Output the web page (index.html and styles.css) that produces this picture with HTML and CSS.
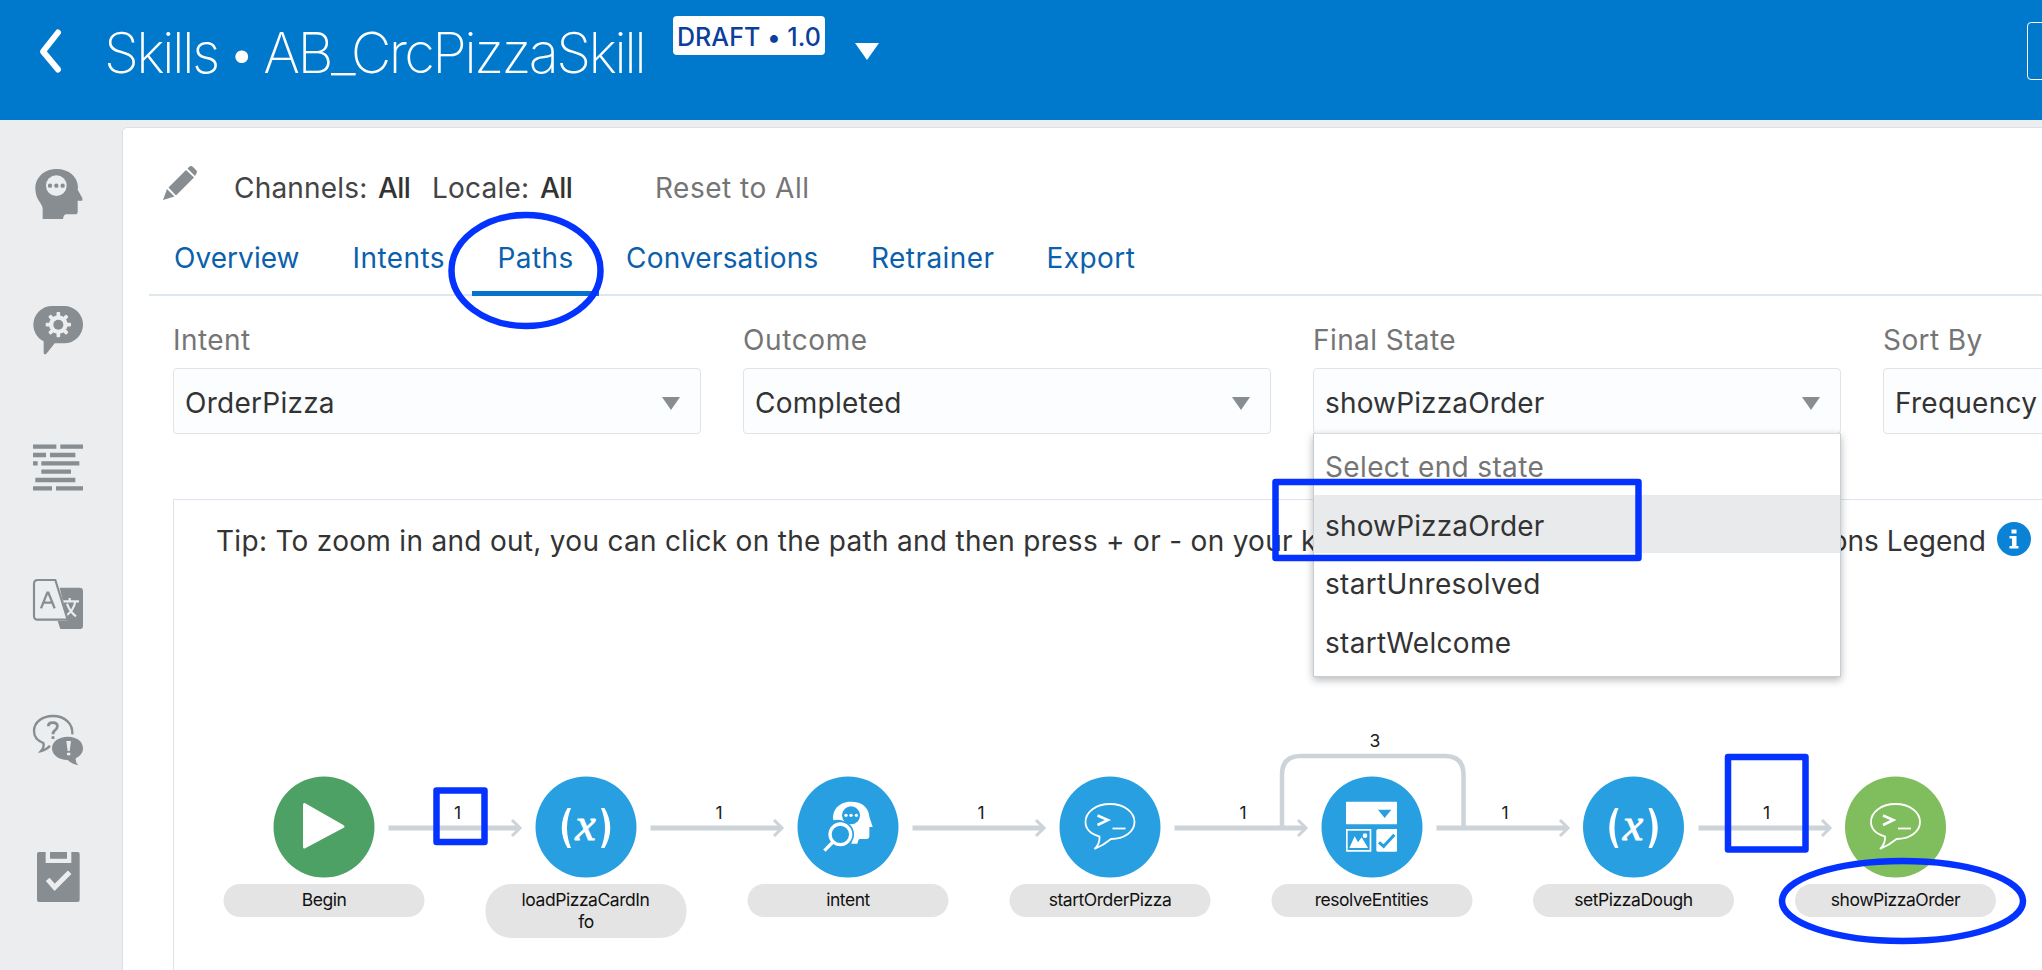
FILE: index.html
```html
<!DOCTYPE html>
<html lang="en">
<head>
<meta charset="utf-8">
<title>Skills • AB_CrcPizzaSkill</title>
<link rel="stylesheet" href="styles.css">
</head>
<body>
<header class="topbar">
  <svg class="back" viewBox="0 0 26 46"><path d="M21 4.500L6 23.500L21 41.500" /></svg>
  <h1 class="title">Skills • AB_CrcPizzaSkill</h1>
  <span class="badge">DRAFT • 1.0</span>
  <svg class="title-caret" viewBox="0 0 24 17"><path d="M0 0H24L12 17Z"/></svg>
  <button class="top-button" aria-label="Train"></button>
</header>
<div class="body">
  <nav class="sidebar">
    <svg class="side-icon" viewBox="0 0 150 150">
      <path class="fill" d="M70 0C109 0 134 24 135 55L134 62L148 87V95H134V128Q134 136 126 136H99Q92 137 90 150H29V118C27 102 7 92 7 58C7 25 34 0 70 0Z"/>
      <circle class="cut" cx="70" cy="50" r="31"/>
      <circle class="fill" cx="51" cy="50" r="6.500"/><circle class="fill" cx="70" cy="50" r="6.500"/><circle class="fill" cx="89" cy="50" r="6.500"/>
    </svg>
    <svg class="side-icon" viewBox="0 0 150 150">
      <path class="fill" d="M56 0H94A56 56 0 0 1 94 112H65L42 141Q39 146 35 145Q32 144 32 140V106A56 56 0 0 1 56 0Z"/>
      <g class="cut"><circle cx="76" cy="56" r="28"/>
      <g id="teeth"><rect x="70.500" y="18" width="11" height="76" rx="3"/><rect x="38" y="50.500" width="76" height="11" rx="3"/></g>
      <use href="#teeth" transform="rotate(45 76 56)"/></g>
      <circle class="fill" cx="76" cy="56" r="15"/>
    </svg>
    <svg class="side-icon" viewBox="0 0 150 150">
      <path class="bars" d="M0 14H70M82 14H150M0 39H39M51 39H127M0 64H14M25 64H139M25 89H114M7 114H127M0 139H57M69 139H150"/>
    </svg>
    <svg class="side-icon" viewBox="0 0 150 150">
      <path class="fill" d="M80 26H140Q150 26 150 36V140Q150 150 140 150H82L74 126H104Z"/>
      <path class="cut-line" d="M91 67H138M110 57V67M127 68Q122 94 100 110M102 74Q110 98 129 112"/>
      <path class="panel-line" d="M14 3H67L104 122H14Q3 122 3 111V14Q3 3 14 3Z"/>
      <path class="line" d="M24 88L43 41H46L65 88M31 71H58"/>
    </svg>
    <svg class="side-icon" viewBox="0 0 150 150">
      <path class="line" d="M118 58C120 25 95 3 60 3C27 3 3 22 3 48C3 65 13 77 31 84Q35 95 24 108Q41 104 51 92"/>
      <path class="line mark" d="M46 34Q46 23 59 23Q74 23 73 35Q72 42 65 47Q60 51 60 58M60 64V72"/>
      <path class="fill" d="M105 65C132 65 150 80 150 100C150 114 141 124 128 130Q127 141 136 151Q117 148 104 135C76 135 57 119 57 100C57 80 77 65 105 65Z"/>
      <path class="cut-fill" d="M100 78H114L110 108H104ZM102 113H112V121H102Z"/>
    </svg>
    <svg class="side-icon" viewBox="0 0 150 150">
      <path class="fill" d="M18 0H38V33H115V0H134Q140 0 140 6V144Q140 150 134 150H18Q12 150 12 144V6Q12 0 18 0ZM51 0H102V20H51Z"/>
      <path class="check" d="M44 82L65 106L110 61"/>
    </svg>
    <svg class="side-icon" viewBox="0 0 150 150"><circle class="fill" cx="72" cy="75" r="75"/></svg>
  </nav>
  <main class="panel">
    <div class="filters">
      <svg class="pencil" viewBox="0 0 34 35"><path d="M0 34L4 23L11.500 30.500ZM5.500 21.500L23 4L31 11.500L13 29.500ZM24.500 2.500L26 1Q28 -1 30 1L33 4Q35 6 33 8L32 10Z"/></svg>
      <span class="f-key channels">Channels:</span><span class="f-val">All</span>
      <span class="f-key locale">Locale:</span><span class="f-val">All</span>
      <span class="reset">Reset to All</span>
    </div>
    <div class="tabs">
      <a class="tab t-overview">Overview</a>
      <a class="tab t-intents">Intents</a>
      <a class="tab t-paths active">Paths</a>
      <a class="tab t-conv">Conversations</a>
      <a class="tab t-retrainer">Retrainer</a>
      <a class="tab t-export">Export</a>
    </div>
    <div class="fields">
      <div class="field"><label>Intent</label>
        <div class="select">OrderPizza<svg class="caret" viewBox="0 0 18 13"><path d="M0 0H18L9 13Z"/></svg></div></div>
      <div class="field"><label class="wide">Outcome</label>
        <div class="select">Completed<svg class="caret" viewBox="0 0 18 13"><path d="M0 0H18L9 13Z"/></svg></div></div>
      <div class="field"><label>Final State</label>
        <div class="select tight">showPizzaOrder<svg class="caret" viewBox="0 0 18 13"><path d="M0 0H18L9 13Z"/></svg>
          <ul class="menu">
            <li class="hint">Select end state</li>
            <li class="selected">showPizzaOrder</li>
            <li class="un">startUnresolved</li>
            <li class="un">startWelcome</li>
          </ul>
        </div></div>
      <div class="field"><label>Sort By</label>
        <div class="select">Frequency</div></div>
    </div>
    <section class="pathbox">
      <div class="tip">
        <p>Tip: To zoom in and out, you can click on the path and then press + or - on your keyboard.</p>
        <span class="legend">Conversations Legend</span>
        <svg class="info" viewBox="0 0 34 34"><circle cx="17" cy="17" r="17"/><path d="M14.500 7.500H19.500V11.500H14.500ZM12.500 14H19.500V24H21.500V26.500H12.500V24H15V16.500H12.500Z"/></svg>
      </div>
      <svg class="diagram" viewBox="174 561 1868 409">
        <defs>
          <g id="edge"><path class="edge" d="M0 0H131"/><path class="arrow" d="M123.500 -8L131.500 0L123.500 8"/></g>
          <g id="var">
            <path class="paren" d="M-18.500 -20Q-30 0 -18.500 20H-15Q-23 0 -15 -20ZM18.500 -20Q30 0 18.500 20H15Q23 0 15 -20Z"/>
            <text class="var-x" x="-0.500" y="11.500">x</text>
          </g>
          <g id="say" class="say">
            <path d="M0 -24C14 -24 24.500 -16 24.500 -6C24.500 4 14 11 1 11Q-6 17 -15.500 21Q-10 16 -10.500 8.500C-19 6 -24.500 1 -24.500 -6C-24.500 -16 -14 -24 0 -24Z"/>
            <path class="prompt" d="M-12.500 -12.500L-2 -8L-12.500 -3"/><path d="M2.500 0.500H15.500"/>
          </g>
          <rect id="pill" x="-100.500" y="884" width="201" height="33" rx="16.500"/>
        </defs>
        <path class="loop" d="M1282 826V775Q1282 756 1300.500 756H1445Q1463.500 756 1463.500 775V826"/>
        <use href="#edge" x="388.500" y="828"/><use href="#edge" x="650.500" y="828"/><use href="#edge" x="912.500" y="828"/>
        <use href="#edge" x="1174.500" y="828"/><use href="#edge" x="1436.500" y="828"/><use href="#edge" x="1698.500" y="828"/>
        <g class="count">
          <text x="457.500" y="818.500">1</text><text x="719" y="818.500">1</text><text x="981" y="818.500">1</text>
          <text x="1243" y="818.500">1</text><text x="1505" y="818.500">1</text><text x="1766.500" y="818.500">1</text>
          <text x="1375" y="747">3</text>
        </g>
        <circle class="begin" cx="324" cy="827" r="50.500"/>
        <circle class="step" cx="586" cy="827" r="50.500"/><circle class="step" cx="848" cy="827" r="50.500"/>
        <circle class="step" cx="1110" cy="827" r="50.500"/><circle class="step" cx="1372" cy="827" r="50.500"/>
        <circle class="step" cx="1633.500" cy="827" r="50.500"/><circle class="final" cx="1895.500" cy="827" r="50.500"/>
        <path class="play" d="M304.500 804.500L343 826.500L304.500 847Z"/>
        <use href="#var" x="586" y="828"/><use href="#var" x="1633.500" y="828"/>
        <use href="#say" x="1110" y="828"/><use href="#say" x="1895.500" y="828"/>
        <g transform="translate(822.700 801.700) scale(.3333)">
          <path class="white" d="M85 0C118 0 138 18 140 45L150 76H140V103Q140 112 131 112H110Q106 116 104 126H86Q90 90 75 66Q56 50 32 56C27 22 52 0 85 0Z"/>
          <circle class="blue" cx="85" cy="41" r="27"/>
          <circle class="white" cx="70" cy="41" r="5"/><circle class="white" cx="85" cy="41" r="5"/><circle class="white" cx="101" cy="41" r="5"/>
          <circle class="blue" cx="53" cy="98" r="41"/>
          <circle class="lens" cx="53" cy="98" r="31"/><path class="lens" d="M31 121L5 147"/>
        </g>
        <g transform="translate(1346 801.700) scale(.3333)">
          <path class="white" d="M2 0H151Q153 0 153 2V68H0V2ZM0 82H76V150H3Q0 150 0 147ZM91 88Q91 82 97 82H153V147Q153 150 150 150H95Q91 150 91 146Z"/>
          <path class="blue" d="M96 24H136L116 49Z"/>
          <path class="blue" d="M5 87H71V145H5Z"/>
          <path class="white" d="M10 139L26 104L36 122L47 107L66 139Z"/>
          <circle class="white" cx="57" cy="102" r="7"/>
          <path class="tick" d="M99 122L113 134L145 99"/>
        </g>
        <g class="pills"><use href="#pill" x="324"/>
          <rect x="485.500" y="884" width="201" height="54" rx="26"/>
          <use href="#pill" x="848"/><use href="#pill" x="1110"/><use href="#pill" x="1372"/><use href="#pill" x="1633.500"/><use href="#pill" x="1895.500"/></g>
        <g class="names">
          <text x="324" y="906">Begin</text>
          <text x="585.500" y="906">loadPizzaCardIn</text><text x="586" y="927.500">fo</text>
          <text x="848" y="906">intent</text><text x="1110" y="906">startOrderPizza</text>
          <text x="1371.500" y="906">resolveEntities</text><text x="1633.500" y="906">setPizzaDough</text>
          <text x="1895.500" y="906">showPizzaOrder</text>
        </g>
      </svg>
    </section>
  </main>
</div>
<svg class="marks" viewBox="0 0 2042 970">
  <ellipse cx="526" cy="270.500" rx="74.500" ry="55.500"/>
  <rect x="436.500" y="790.500" width="48" height="51.500"/>
  <rect x="1275.500" y="482" width="363" height="76"/>
  <rect x="1728" y="757" width="77.500" height="92.500"/>
  <ellipse cx="1902.500" cy="901" rx="120.500" ry="40"/>
</svg>
</body>
</html>
```
FILE: styles.css
```css
* { box-sizing: border-box; }
body {
  margin: 0; width: 2042px; height: 970px; overflow: hidden; position: relative;
  background: #ebedef; color: #333; font: 440 28px/40px Inter, "Liberation Sans", sans-serif;
}
svg { display: block; flex: none; }

.topbar { height: 120px; background: #0079cc; display: flex; align-items: flex-start; }
.back { width: 26px; height: 46px; margin: 28px 0 0 37px; fill: none; stroke: #fff; stroke-width: 6; stroke-linecap: round; stroke-linejoin: round; }
.title { margin: 13px 0 0 41px; width: 569px; font-weight: 240; font-size: 56px; line-height: 80px; letter-spacing: -2.620px; word-spacing: -4.700px; color: #fff; white-space: nowrap; }
.badge { margin-top: 16px; width: 152px; height: 39px; border-radius: 4px; background: #fff; color: #0a3f9c; font-size: 25px; font-weight: 500; line-height: 42px; text-align: center; white-space: nowrap; letter-spacing: .1px; }
.title-caret { width: 24px; height: 17px; margin: 43px 0 0 30px; fill: #fff; }
.top-button { margin: 22px -40px 0 auto; width: 55px; height: 58px; border: 1px solid #fff; border-radius: 4px; background: none; flex: none; }

.body { display: flex; height: 850px; overflow: hidden; }
.sidebar { width: 122px; flex: none; padding: 49px 0 0 33px; display: flex; flex-direction: column; gap: 86.600px; }
.side-icon { width: 50px; height: 50px; overflow: visible; }
.side-icon .fill { fill: #878d90; }
.side-icon .cut, .side-icon .cut-fill { fill: #ebedef; }
.side-icon .bars { stroke: #878d90; stroke-width: 13; }
.side-icon .line { fill: none; stroke: #878d90; stroke-width: 7; }
.side-icon .mark { stroke-width: 8.500; }
.side-icon .panel-line { fill: #ebedef; stroke: #878d90; stroke-width: 6.500; }
.side-icon .cut-line { fill: none; stroke: #ebedef; stroke-width: 6.500; }
.side-icon .check { fill: none; stroke: #ebedef; stroke-width: 15; }

.panel { flex: none; width: 1930px; height: 900px; margin-top: 7px; padding-top: 40px; background: #fff; border: 1px solid #d8e1e9; border-top-left-radius: 5px; }
.filters { display: flex; height: 40px; padding-left: 40px; white-space: nowrap; }
.pencil { width: 34px; height: 35px; margin: -2px 37px 0 0; fill: #878d90; }
.channels { width: 144px; letter-spacing: .200px; color: #444; }
.f-val { width: 54px; font-weight: 460; letter-spacing: -.600px; }
.locale { width: 108px; letter-spacing: .200px; color: #444; }
.reset { margin-left: 61px; color: #757575; letter-spacing: .500px; }

.tabs { display: flex; gap: 2px; margin: 0 0 24px 26px; height: 88px; border-bottom: 2px solid #dfe7ee; border-top-left-radius: 4px; }
.tab { height: 88px; padding: 30px 0 0 25.500px; color: #0b5fab; border-bottom: 5px solid transparent; flex: none; letter-spacing: .440px; }
.tab.active { border-color: #0572ce; }
.t-overview { width: 176px; letter-spacing: .050px; padding-left: 25px; }
.t-intents { width: 143px; }
.t-paths { width: 127px; }
.t-conv { width: 243px; letter-spacing: .200px; padding-left: 25px; }
.t-retrainer { width: 173px; letter-spacing: .450px; padding-left: 25px; }
.t-export { width: 140px; }

.fields { display: flex; gap: 42px; padding-left: 50px; }
.field { width: 528px; flex: none; }
.field label { display: block; height: 40px; margin-bottom: 8px; color: #757575; letter-spacing: .420px; }
.field label.wide { letter-spacing: .600px; }
.select { position: relative; height: 66px; padding: 14px 20px 0 11px; border: 1px solid #dfe4e7; border-radius: 4px; background: #fcfdfe; letter-spacing: .260px; display: flex; justify-content: space-between; }
.select.tight, .menu .selected { letter-spacing: .150px; }
.caret { width: 18px; height: 13px; margin-top: 14px; fill: #878d90; }
.menu { position: absolute; z-index: 2; left: -1px; top: 64px; width: 528px; height: 244px; margin: 0; padding: 2px 0 0; list-style: none; background: #fff; border: 1px solid #c4ced7; border-top-color: #d6dde3; box-shadow: 0 3px 8px rgba(0,0,0,.28); }
.menu li { height: 58.600px; padding: 11px 0 0 11px; }
.menu .hint { color: #757575; letter-spacing: .360px; }
.menu .selected { background: #e9eaec; }
.menu .un { letter-spacing: .320px; }

.pathbox { margin: 65px 0 0 50px; width: 1880px; height: 480px; border: 1px solid #dbe4ee; }
.tip { display: flex; height: 61px; padding: 21px 0 0 42px; width: 1857px; white-space: nowrap; letter-spacing: .295px; }
.tip p { margin: 0; }
.legend { margin-left: auto; letter-spacing: 0; }
.info { width: 34px; height: 34px; margin: 1px 0 0 11px; fill: #0a83d6; }
.info path { fill: #fff; }

.diagram { width: 1868px; height: 409px; }
.edge { fill: none; stroke: #ccd3d9; stroke-width: 5; }
.loop { fill: none; stroke: #ccd3d9; stroke-width: 4.500; }
.arrow { fill: none; stroke: #ccd3d9; stroke-width: 3; }
.count text, .names text { text-anchor: middle; font-size: 17.500px; fill: #222; }
.names text { fill: #111; letter-spacing: -.450px; }
.begin { fill: #4da164; }
.step, .blue { fill: #289fe0; }
.final { fill: #80bd5c; }
.play { fill: #fff; stroke: #fff; stroke-width: 3; stroke-linejoin: round; }
.white, .paren { fill: #fff; }
.var-x { font: italic 46px "Liberation Serif", serif; fill: #fff; stroke: #fff; stroke-width: .9; text-anchor: middle; }
.say { fill: none; stroke: #fff; stroke-width: 1.800; }
.say .prompt { stroke-width: 2.500; }
.lens { fill: none; stroke: #fff; stroke-width: 10; }
.tick { fill: none; stroke: #289fe0; stroke-width: 9; }
.pills { fill: #e4e4e4; }

.marks { position: absolute; left: 0; top: 0; width: 2042px; height: 970px; z-index: 5; pointer-events: none; fill: none; stroke: #0433ff; stroke-width: 6.500; stroke-linejoin: round; }
```
